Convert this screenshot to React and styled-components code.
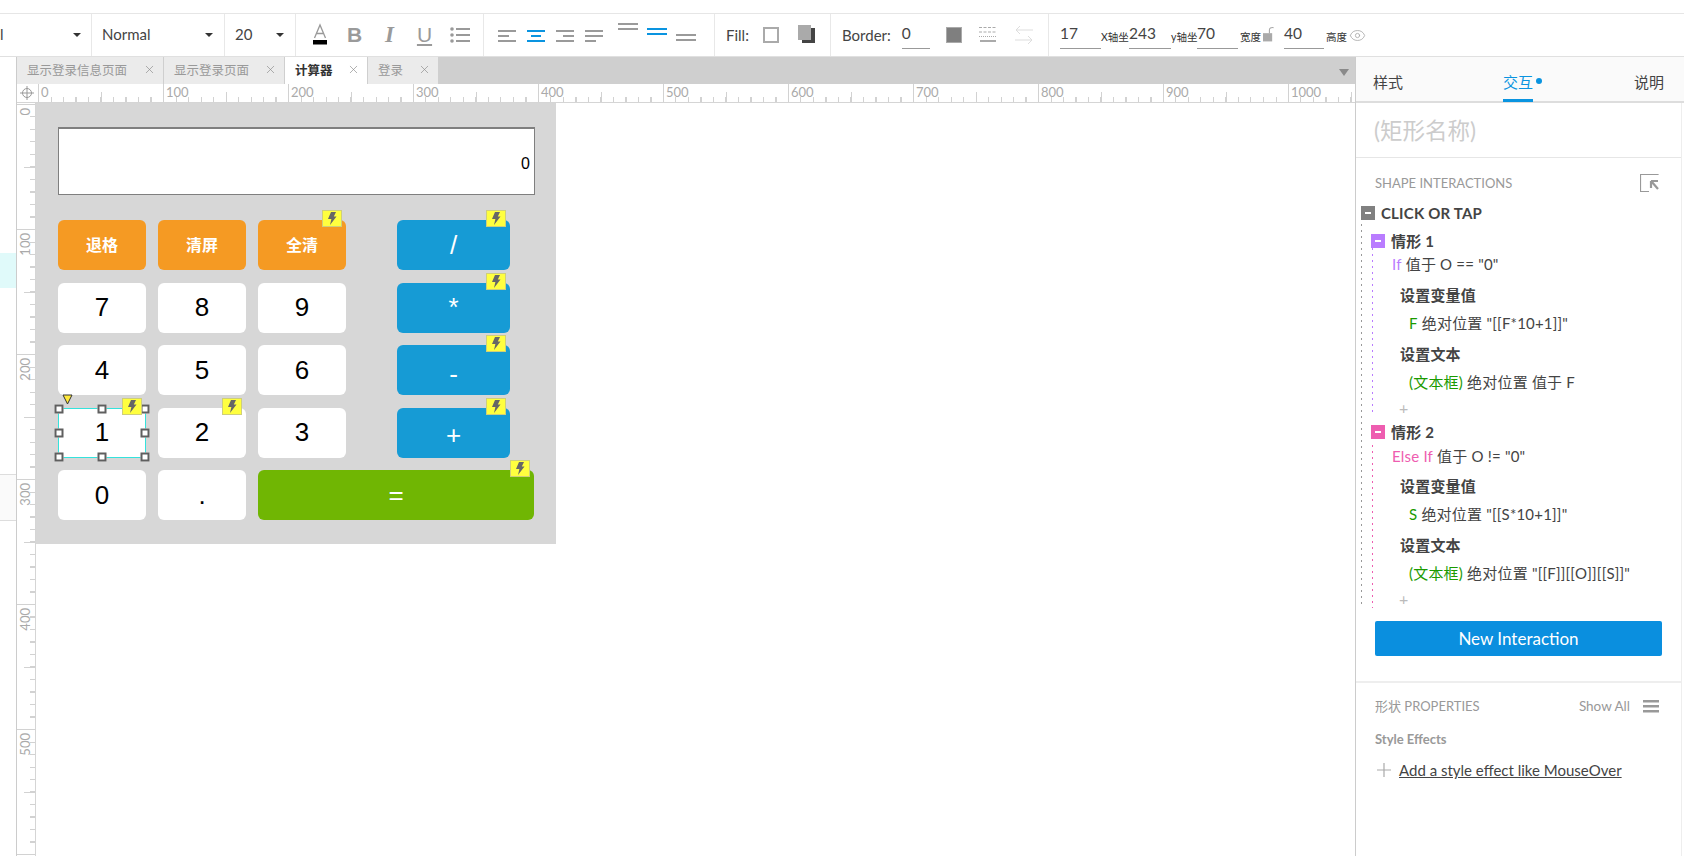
import React from 'react';
import styled, {createGlobalStyle} from 'styled-components';
import {Eye, X} from 'lucide-react';

const UI_FONT = '"Lato", "Noto Sans CJK SC", sans-serif';
const ARIAL = '"Liberation Sans", "Noto Sans CJK SC", sans-serif';

const GlobalStyle = createGlobalStyle`
    html, body {
        margin: 0;
        background: #fff;
        overflow: hidden;
        font-family: ${UI_FONT};
        color: #333;
    }
`;

const Page = styled.div`
    width: 1684px;
    height: 856px;
    display: flex;
    flex-direction: column;
    overflow: hidden;
`;

const TopStrip = styled.div`
    height: 13px;
    flex: none;
    border-bottom: 1px solid #e6e6e6;
`;

/* toolbar */

const Toolbar = styled.div`
    height: 43px;
    flex: none;
    display: flex;
    border-bottom: 1px solid #e0e0e0;
    box-sizing: border-box;
`;

const Section = styled.div`
    width: ${props => props.$width}px;
    flex: none;
    box-sizing: border-box;
    padding-left: ${props => props.$pad || 0}px;
    padding-right: ${props => props.$padRight || 0}px;
    display: flex;
    align-items: center;
    justify-content: ${props => props.$between ? "space-between" : "flex-start"};
    border-right: ${props => props.$last ? "none" : "1px solid #e8e8e8"};
`;

const SelectText = styled.span`
    font-size: 15px;
    line-height: 18px;
    margin-bottom: 3px;
    color: #444;
`;

const Caret = styled.span`
    width: 0;
    height: 0;
    border-left: 4px solid transparent;
    border-right: 4px solid transparent;
    border-top: 4px solid #333;
`;

const IconSlot = styled.div`
    width: ${props => props.$width}px;
    margin-left: ${props => props.$left || 0}px;
    flex: none;
    display: flex;
    align-items: center;
    justify-content: center;
`;

const Glyph = styled.span`
    font-family: ${props => props.$italic ? '"Liberation Serif", serif' : ARIAL};
    font-size: ${props => props.$italic ? "23px" : "21px"};
    line-height: 24px;
    color: #9a9a9a;
    font-weight: ${props => props.$bold ? 700 : 400};
    font-style: ${props => props.$italic ? "italic" : "normal"};
    text-decoration: ${props => props.$underline ? "underline" : "none"};
`;

const ToolLabel = styled.span`
    font-size: 15px;
    color: #444;
    margin-right: ${props => props.$right || 0}px;
`;

const NumField = styled.div`
    width: ${props => props.$width}px;
    margin-right: ${props => props.$right || 0}px;
    margin-left: ${props => props.$left || 0}px;
    flex: none;
    height: 27px;
    margin-top: 1px;
    line-height: 23px;
    font-size: 15.5px;
    color: #444;
    border-bottom: 1px solid #999;
    box-sizing: border-box;
`;

const TinyLabel = styled.span`
    width: ${props => props.$width}px;
    margin-left: ${props => props.$left || 0}px;
    flex: none;
    font-size: 10.5px;
    margin-top: 3px;
    color: #333;
    white-space: nowrap;
`;

const Bars = ({rects, color = "#9a9a9a", width = 20, height = 24}) => (
    <svg width={width} height={height} viewBox={`0 0 ${width} ${height}`}>
        {rects.map((r, i) => <rect key={i} x={r[0]} y={r[1]} width={r[2]} height={r[3]} fill={color}/>)}
    </svg>
);

const FontColorIcon = () => (
    <svg width="16" height="24" viewBox="0 0 16 24">
        <path d="M2.5 15 L8 2 L13.5 15 M4.5 10.5 H11.5" fill="none" stroke="#999" strokeWidth="1.3"/>
        <rect x="1" y="17" width="14" height="4.5" fill="#000"/>
    </svg>
);

const ListIcon = () => (
    <svg width="20" height="20" viewBox="0 0 20 20">
        <circle cx="2" cy="4" r="1.8" fill="#999"/>
        <circle cx="2" cy="10" r="1.8" fill="#999"/>
        <circle cx="2" cy="16" r="1.8" fill="#999"/>
        <rect x="6" y="3" width="14" height="2" fill="#999"/>
        <rect x="6" y="9" width="14" height="2" fill="#999"/>
        <rect x="6" y="15" width="14" height="2" fill="#999"/>
    </svg>
);

const ShadowIcon = () => (
    <svg width="17" height="20" viewBox="0 0 17 20">
        <rect x="4" y="3" width="13" height="15" fill="#444"/>
        <rect x="0" y="0" width="13" height="15" fill="#aaa"/>
    </svg>
);

const BorderStyleIcon = () => (
    <svg width="18" height="20" viewBox="0 0 18 20">
        <path d="M0 2.5H18 M0 7H18" stroke="#aaa" strokeWidth="1" strokeDasharray="3 1.5"/>
        <path d="M0 11.5H18" stroke="#aaa" strokeWidth="1" strokeDasharray="1 1"/>
        <rect x="1" y="15" width="16" height="2" fill="#aaa"/>
    </svg>
);

const ArrowsIcon = () => (
    <svg width="18" height="20" viewBox="0 0 18 20">
        <path d="M18 5H1 M5 1L1 5L5 9 M0 15H17 M13 11L17 15L13 19" fill="none" stroke="#ddd" strokeWidth="1"/>
    </svg>
);

const LockIcon = () => (
    <svg width="12" height="20" viewBox="0 0 12 20">
        <path d="M7 8V4.5C7 2.5 8.5 1.5 11.5 2" fill="none" stroke="#aaa" strokeWidth="1.2"/>
        <rect x="0" y="8" width="10" height="9" fill="#aaa"/>
    </svg>
);

const FillBox = styled.div`
    width: 16px;
    height: 16px;
    box-sizing: border-box;
    border: 2px solid #aaa;
    background: #fff;
`;

const Swatch = styled.div`
    width: 16px;
    height: 16px;
    background: #7f7f7f;
    border: 1px solid #aaa;
    box-sizing: border-box;
`;

const AppToolbar = () => <Toolbar>
    <Section $width={92} $between $padRight={10}>
        <SelectText>l</SelectText>
        <Caret/>
    </Section>
    <Section $width={133} $between $pad={10} $padRight={11}>
        <SelectText>Normal</SelectText>
        <Caret/>
    </Section>
    <Section $width={71} $between $pad={10} $padRight={11}>
        <SelectText>20</SelectText>
        <Caret/>
    </Section>
    <Section $width={188} $pad={6}>
        <IconSlot $width={35}><FontColorIcon/></IconSlot>
        <IconSlot $width={35}><Glyph $bold>B</Glyph></IconSlot>
        <IconSlot $width={35}><Glyph $italic $bold>I</Glyph></IconSlot>
        <IconSlot $width={35}><Glyph $underline>U</Glyph></IconSlot>
        <IconSlot $width={35}><ListIcon/></IconSlot>
    </Section>
    <Section $width={231} $pad={8}>
        <IconSlot $width={29}><Bars rects={[[1, 7, 18, 2], [1, 12, 11, 2], [1, 17, 18, 2]]}/></IconSlot>
        <IconSlot $width={29}><Bars color="#0a94e0" rects={[[1, 7, 18, 2], [5, 12, 10, 2], [1, 17, 18, 2]]}/></IconSlot>
        <IconSlot $width={29}><Bars rects={[[1, 7, 18, 2], [8, 12, 11, 2], [1, 17, 18, 2]]}/></IconSlot>
        <IconSlot $width={29}><Bars rects={[[1, 7, 18, 2], [1, 12, 18, 2], [1, 17, 11, 2]]}/></IconSlot>
        <IconSlot $width={29} $left={5}><Bars rects={[[0, 0, 20, 2], [0, 5, 20, 2]]}/></IconSlot>
        <IconSlot $width={29}><Bars color="#0a94e0" rects={[[0, 5, 20, 2], [0, 10, 20, 2]]}/></IconSlot>
        <IconSlot $width={29}><Bars rects={[[0, 11, 20, 2], [0, 16, 20, 2]]}/></IconSlot>
    </Section>
    <Section $width={116} $pad={11}>
        <ToolLabel $right={14}>Fill:</ToolLabel>
        <FillBox/>
        <IconSlot $width={17} $left={19}><ShadowIcon/></IconSlot>
    </Section>
    <Section $width={218} $pad={11}>
        <ToolLabel $right={11}>Border:</ToolLabel>
        <NumField $width={28} $right={16}>0</NumField>
        <Swatch/>
        <IconSlot $width={18} $left={17}><BorderStyleIcon/></IconSlot>
        <IconSlot $width={18} $left={18}><ArrowsIcon/></IconSlot>
    </Section>
    <Section $width={330} $pad={11} $last>
        <NumField $width={41}>17</NumField>
        <TinyLabel $width={28}>X轴坐</TinyLabel>
        <NumField $width={42}>243</NumField>
        <TinyLabel $width={26}>y轴坐</TinyLabel>
        <NumField $width={41}>70</NumField>
        <TinyLabel $width={23} $left={2}>宽度</TinyLabel>
        <IconSlot $width={11}><LockIcon/></IconSlot>
        <NumField $width={40} $left={10}>40</NumField>
        <TinyLabel $width={22} $left={2}>高度</TinyLabel>
        <IconSlot $width={18}><Eye size={17} color="#aaa" strokeWidth={1.2}/></IconSlot>
    </Section>
</Toolbar>;

/* tabs and rulers */

const Main = styled.div`
    flex: 1;
    min-height: 0;
    display: flex;
`;

const LeftRail = styled.div`
    width: 17px;
    flex: none;
    box-sizing: border-box;
    border-right: 1px solid #ccc;
    display: flex;
    flex-direction: column;
`;

const RailBlock = styled.div`
    margin-top: ${props => props.$top}px;
    height: ${props => props.$height}px;
    flex: none;
    box-sizing: border-box;
    background: ${props => props.$color};
    border-top: ${props => props.$lined ? "1px solid #ddd" : "none"};
    border-bottom: ${props => props.$lined ? "1px solid #ddd" : "none"};
`;

const Workspace = styled.div`
    flex: 1;
    min-width: 0;
    display: flex;
    flex-direction: column;
`;

const TabStrip = styled.div`
    height: 27px;
    flex: none;
    position: relative;
    display: flex;
    gap: 1px;
    background: #cfcfcf;
`;

const Tab = styled.div`
    width: ${props => props.$width}px;
    flex: none;
    box-sizing: border-box;
    padding: 0 7px 2px 10px;
    display: flex;
    align-items: center;
    justify-content: space-between;
    font-size: 12.5px;
    font-weight: ${props => props.$active ? 700 : 400};
    color: ${props => props.$active ? "#333" : "#999"};
    background: ${props => props.$active ? "#fff" : "#ebebeb"};
    svg {
        flex: none;
    }
`;

const TabMenuCaret = styled.span`
    position: absolute;
    right: 6px;
    top: 12px;
    width: 0;
    height: 0;
    border-left: 5px solid transparent;
    border-right: 5px solid transparent;
    border-top: 7px solid #8a8a8a;
`;

const RulerRow = styled.div`
    height: 19px;
    flex: none;
    display: flex;
    border-bottom: 1px solid #d5d5d5;
    box-sizing: border-box;
`;

const RulerCorner = styled.div`
    width: 21px;
    flex: none;
    box-sizing: border-box;
    padding-right: 2px;
    display: flex;
    align-items: center;
    justify-content: center;
`;

const HRuler = styled.div`
    flex: 1;
    min-width: 0;
    display: flex;
    overflow: hidden;
`;

const TICK = "#d2d2d2";

const HCell = styled.div`
    width: 125px;
    flex: none;
    box-sizing: border-box;
    padding: 1px 0 0 3px;
    font-size: 13px;
    line-height: 15px;
    color: #aaa;
    background:
        linear-gradient(${TICK}, ${TICK}) 0 0 / 1px 100% no-repeat,
        linear-gradient(${TICK}, ${TICK}) 62.5px 100% / 1px 10px no-repeat,
        repeating-linear-gradient(90deg, ${TICK} 0 1px, transparent 1px 12.5px) 0 100% / 100% 5px no-repeat;
`;

const CanvasRow = styled.div`
    flex: 1;
    min-height: 0;
    display: flex;
`;

const VRuler = styled.div`
    width: 19px;
    flex: none;
    box-sizing: border-box;
    padding-top: 1px;
    border-right: 1px solid #d5d5d5;
    overflow: hidden;
`;

const VCell = styled.div`
    height: 125px;
    box-sizing: border-box;
    padding: 4px 0 0 1px;
    background:
        linear-gradient(${TICK}, ${TICK}) 0 0 / 100% 1px no-repeat,
        linear-gradient(${TICK}, ${TICK}) 100% 62.5px / 11px 1px no-repeat,
        repeating-linear-gradient(180deg, ${TICK} 0 1px, transparent 1px 12.5px) 100% 0 / 5px 100% no-repeat;
`;

const VLabel = styled.span`
    display: block;
    writing-mode: vertical-rl;
    transform: rotate(180deg);
    font-size: 13px;
    line-height: 14px;
    color: #aaa;
`;

const Crosshair = () => (
    <svg width="14" height="14" viewBox="0 0 14 14">
        <circle cx="7" cy="7" r="4.5" fill="none" stroke="#999" strokeWidth="1"/>
        <path d="M7 0V14 M0 7H14" stroke="#999" strokeWidth="1"/>
    </svg>
);

/* calculator on the canvas */

const Canvas = styled.div`
    flex: 1;
    min-width: 0;
    background: #fff;
`;

const Artboard = styled.div`
    width: 520px;
    height: 441px;
    box-sizing: border-box;
    padding: 24px 22px;
    background: #d7d7d7;
`;

const Display = styled.div`
    width: 477px;
    height: 68px;
    box-sizing: border-box;
    margin-bottom: 25px;
    padding-right: 4px;
    background: #fff;
    border: 1px solid #7f7f7f;
    border-top-width: 2px;
    display: flex;
    align-items: center;
    justify-content: flex-end;
    font-family: ${ARIAL};
    font-size: 16px;
    padding-top: 4px;
    color: #000;
`;

const Keypad = styled.div`
    display: grid;
    grid-template-columns: 88px 88px 88px 27px 113px 12px;
    grid-auto-rows: 50px;
    column-gap: 12px;
    row-gap: 12.5px;
`;

const KEY_COLORS = {
    white: "#fff",
    orange: "#f59a23",
    blue: "#169bd5",
    green: "#70b603"
};

const Key = styled.div`
    position: relative;
    grid-column: ${props => props.$column || "auto"};
    border-radius: 6px;
    display: flex;
    align-items: center;
    justify-content: center;
    font-family: ${ARIAL};
    font-size: ${props => props.$small ? "16px" : "26px"};
    font-weight: ${props => props.$small ? 700 : 400};
    color: ${props => props.$kind === "white" ? "#000" : "#fff"};
    background: ${props => KEY_COLORS[props.$kind]};
`;

const Badge = styled.span`
    position: absolute;
    right: 4px;
    top: -10px;
    width: 20px;
    height: 17px;
    box-sizing: border-box;
    background: #ffff3f;
    border: 1px solid #cfcf7a;
    display: flex;
    align-items: center;
    justify-content: center;
    z-index: 2;
`;

const Selection = styled.div`
    position: absolute;
    inset: 0;
    border: 1px solid #35e2dc;
    background: #fff;
    z-index: 1;
`;

const Handle = styled.span`
    position: absolute;
    left: ${props => props.$x}%;
    top: ${props => props.$y}%;
    width: 9px;
    height: 9px;
    box-sizing: border-box;
    transform: translate(-50%, -50%);
    background: #fff;
    border: 2px solid #5f5f5f;
`;

const KeyLabel = styled.span`
    position: relative;
    z-index: 1;
    margin-top: ${props => props.$shift || 0}px;
`;

const Marker = styled.svg`
    position: absolute;
    left: 4px;
    top: -14px;
    z-index: 2;
`;

const Bolt = () => (
    <svg width="10" height="13" viewBox="0 0 10 13">
        <path d="M4 0H9L6.8 4.5H9.5L3 13L4.4 7H1Z" fill="#666"/>
    </svg>
);

const HANDLES = [[0, 0], [50, 0], [100, 0], [0, 50], [100, 50], [0, 100], [50, 100], [100, 100]];

const CalcKey = ({label, kind = "white", small, column, bolt, selected, shift}) => (
    <Key $kind={kind} $small={small} $column={column}>
        {selected && <Selection>
            {HANDLES.map(h => <Handle key={h.join()} $x={h[0]} $y={h[1]}/>)}
        </Selection>}
        {selected && <Marker width="11" height="11" viewBox="0 0 11 11">
            <path d="M1 1H10L5.5 10Z" fill="#ffe93b" stroke="#333" strokeWidth="1"/>
        </Marker>}
        <KeyLabel $shift={shift}>{label}</KeyLabel>
        {bolt && <Badge><Bolt/></Badge>}
    </Key>
);

const Calculator = () => <Artboard>
    <Display>0</Display>
    <Keypad>
        <CalcKey label="退格" kind="orange" small shift={-2}/>
        <CalcKey label="清屏" kind="orange" small shift={-2}/>
        <CalcKey label="全清" kind="orange" small bolt shift={-2}/>
        <CalcKey label="/" kind="blue" column="5" bolt/>
        <CalcKey label="7" column="1"/>
        <CalcKey label="8"/>
        <CalcKey label="9"/>
        <CalcKey label="*" kind="blue" column="5" bolt/>
        <CalcKey label="4" column="1"/>
        <CalcKey label="5"/>
        <CalcKey label="6"/>
        <CalcKey label="-" kind="blue" column="5" bolt shift={9}/>
        <CalcKey label="1" column="1" bolt selected/>
        <CalcKey label="2" bolt/>
        <CalcKey label="3"/>
        <CalcKey label="+" kind="blue" column="5" bolt shift={5}/>
        <CalcKey label="0" column="1"/>
        <CalcKey label="."/>
        <CalcKey label="=" kind="green" column="3 / 7" bolt/>
    </Keypad>
</Artboard>;

/* right panel */

const Panel = styled.div`
    width: 329px;
    flex: none;
    box-sizing: border-box;
    border-left: 1px solid #ccc;
    display: flex;
    flex-direction: column;
`;

const PanelTabs = styled.div`
    height: 46px;
    flex: none;
    box-sizing: border-box;
    padding: 0 20px 0 17px;
    display: flex;
    align-items: flex-end;
    justify-content: space-between;
    background: #fafafa;
    border-bottom: 2px solid #ddd;
`;

const PanelTab = styled.div`
    position: relative;
    font-size: 15px;
    line-height: 18px;
    padding-bottom: 8px;
    margin-left: ${props => props.$active ? "7px" : "0"};
    margin-right: ${props => props.$active ? "8px" : "0"};
    color: ${props => props.$active ? "#0a94e0" : "#444"};
    border-bottom: 3px solid ${props => props.$active ? "#0a94e0" : "transparent"};
    margin-bottom: -1px;
`;

const TabDot = styled.span`
    position: absolute;
    left: 33px;
    top: 5px;
    width: 6px;
    height: 6px;
    border-radius: 50%;
    background: #0a94e0;
`;

const PanelBody = styled.div`
    flex: 1;
    margin-right: 2px;
    border-right: 1px solid #eee;
    display: flex;
    flex-direction: column;
`;

const ShapeName = styled.div`
    height: 55px;
    flex: none;
    box-sizing: border-box;
    padding: 0 0 2px 18px;
    display: flex;
    align-items: center;
    font-size: 22.5px;
    color: #ccc;
    border-bottom: 1px solid #e6e6e6;
`;

const SectionHead = styled.div`
    height: ${props => props.$height}px;
    flex: none;
    box-sizing: border-box;
    padding: ${props => props.$top || 0}px 22px 0 19px;
    display: flex;
    align-items: center;
    justify-content: space-between;
    font-size: 13px;
    color: #999;
`;

const Tree = styled.div`
    position: relative;
    padding-bottom: 11px;
`;

const Guide = styled.span`
    position: absolute;
    left: ${props => props.$left}px;
    top: ${props => props.$top}px;
    height: ${props => props.$height}px;
    width: 1px;
    background: repeating-linear-gradient(180deg, ${props => props.$color} 0 2px, transparent 2px 6px);
`;

const Row = styled.div`
    height: 22px;
    box-sizing: border-box;
    margin-top: ${props => props.$gap || 0}px;
    padding-left: ${props => props.$indent}px;
    display: flex;
    align-items: center;
    font-size: 15px;
    line-height: 22px;
    letter-spacing: 0.2px;
    white-space: pre;
    color: #444;
    font-weight: ${props => props.$bold ? 700 : 400};
`;

const ToggleBox = styled.span`
    position: relative;
    width: 14px;
    height: 14px;
    flex: none;
    margin-right: 6px;
    background: ${props => props.$color};
    &::after {
        content: "";
        position: absolute;
        left: 4px;
        top: 6px;
        width: 6px;
        height: 2px;
        background: #fff;
    }
`;

const Keyword = styled.span`
    color: ${props => props.$color};
`;

const AddMark = styled.span`
    font-size: 16px;
    font-weight: 400;
    color: #bbb;
`;

const PrimaryButton = styled.div`
    width: 287px;
    height: 35px;
    flex: none;
    margin-left: 19px;
    border-radius: 2px;
    display: flex;
    align-items: center;
    justify-content: center;
    font-size: 17px;
    color: #fff;
    background: #0a8fdf;
`;

const Divider = styled.div`
    height: 2px;
    flex: none;
    margin-top: 25px;
    background: #eee;
`;

const ShowAll = styled.span`
    display: flex;
    align-items: center;
    gap: 13px;
    font-size: 13.5px;
`;

const EffectsTitle = styled.div`
    padding-left: 19px;
    margin-top: 3px;
    font-size: 13px;
    font-weight: 700;
    color: #999;
`;

const AddEffect = styled.div`
    padding-left: 21px;
    margin-top: 14px;
    display: flex;
    align-items: center;
    gap: 8px;
    font-size: 15px;
    color: #444;
    span {
        text-decoration: underline;
    }
`;

const ExportIcon = () => (
    <svg width="19" height="18" viewBox="0 0 19 18">
        <path d="M18 1V0.5H0.5V17.5H9" fill="none" stroke="#999" strokeWidth="1.2"/>
        <path d="M11 7H18 M11 7V14 M11.5 7.5L18 15" fill="none" stroke="#999" strokeWidth="2.2"/>
    </svg>
);

const MenuIcon = () => <Bars width={16} height={14} color="#999" rects={[[0, 1, 16, 2.5], [0, 6, 16, 2.5], [0, 11, 16, 2.5]]}/>;

const PlusIcon = () => (
    <svg width="14" height="14" viewBox="0 0 14 14">
        <path d="M7 0V14 M0 7H14" stroke="#aaa" strokeWidth="1.2"/>
    </svg>
);

const GREEN = "#1a9a00";
const PURPLE = "#b97cff";
const PINK = "#ee5db0";

const SidePanel = () => <Panel>
    <PanelTabs>
        <PanelTab>样式</PanelTab>
        <PanelTab $active>交互<TabDot/></PanelTab>
        <PanelTab>说明</PanelTab>
    </PanelTabs>
    <PanelBody>
        <ShapeName>(矩形名称)</ShapeName>
        <SectionHead $height={44} $top={6}>
            SHAPE INTERACTIONS
            <ExportIcon/>
        </SectionHead>
        <Tree>
            <Guide $left={5} $top={22} $height={384} $color="#999"/>
            <Guide $left={16} $top={46} $height={168} $color={PURPLE}/>
            <Guide $left={16} $top={243} $height={163} $color={PINK}/>
            <Row $indent={5} $bold><ToggleBox $color="#808080"/>CLICK OR TAP</Row>
            <Row $indent={15} $gap={6} $bold><ToggleBox $color={PURPLE}/>情形 1</Row>
            <Row $indent={36} $gap={1}><Keyword $color={PURPLE}>If</Keyword> 值于 O == "0"</Row>
            <Row $indent={44} $gap={9} $bold>设置变量值</Row>
            <Row $indent={53} $gap={6}><Keyword $color={GREEN}>F</Keyword> 绝对位置 "[[F*10+1]]"</Row>
            <Row $indent={44} $gap={9} $bold>设置文本</Row>
            <Row $indent={53} $gap={6}><Keyword $color={GREEN}>(文本框)</Keyword> 绝对位置 值于 F</Row>
            <Row $indent={43} $gap={4}><AddMark>+</AddMark></Row>
            <Row $indent={15} $gap={2} $bold><ToggleBox $color={PINK}/>情形 2</Row>
            <Row $indent={36} $gap={2}><Keyword $color={PINK}>Else If</Keyword> 值于 O != "0"</Row>
            <Row $indent={44} $gap={8} $bold>设置变量值</Row>
            <Row $indent={53} $gap={6}><Keyword $color={GREEN}>S</Keyword> 绝对位置 "[[S*10+1]]"</Row>
            <Row $indent={44} $gap={9} $bold>设置文本</Row>
            <Row $indent={53} $gap={6}><Keyword $color={GREEN}>(文本框)</Keyword> 绝对位置 "[[F]][[O]][[S]]"</Row>
            <Row $indent={43} $gap={4}><AddMark>+</AddMark></Row>
        </Tree>
        <PrimaryButton>New Interaction</PrimaryButton>
        <Divider/>
        <SectionHead $height={45}>
            形状 PROPERTIES
            <ShowAll>Show All<MenuIcon/></ShowAll>
        </SectionHead>
        <EffectsTitle>Style Effects</EffectsTitle>
        <AddEffect><PlusIcon/><span>Add a style effect like MouseOver</span></AddEffect>
    </PanelBody>
</Panel>;

const TABS = [
    {name: "显示登录信息页面", width: 146},
    {name: "显示登录页面", width: 120},
    {name: "计算器", width: 82, active: true},
    {name: "登录", width: 70}
];

const HORIZONTAL_MARKS = [0, 100, 200, 300, 400, 500, 600, 700, 800, 900, 1000];
const VERTICAL_MARKS = [0, 100, 200, 300, 400, 500];

const App = () => <Page>
    <GlobalStyle/>
    <TopStrip/>
    <AppToolbar/>
    <Main>
        <LeftRail>
            <RailBlock $top={196} $height={35} $color="#e0fafa"/>
            <RailBlock $top={186} $height={47} $color="#fafafa" $lined/>
        </LeftRail>
        <Workspace>
            <TabStrip>
                {TABS.map(tab => <Tab key={tab.name} $width={tab.width} $active={tab.active}>
                    {tab.name}
                    <X size={13} color="#888" strokeWidth={1.2}/>
                </Tab>)}
                <TabMenuCaret/>
            </TabStrip>
            <RulerRow>
                <RulerCorner><Crosshair/></RulerCorner>
                <HRuler>
                    {HORIZONTAL_MARKS.map(mark => <HCell key={mark}>{mark}</HCell>)}
                </HRuler>
            </RulerRow>
            <CanvasRow>
                <VRuler>
                    {VERTICAL_MARKS.map(mark => <VCell key={mark}><VLabel>{mark}</VLabel></VCell>)}
                    <VCell/>
                </VRuler>
                <Canvas>
                    <Calculator/>
                </Canvas>
            </CanvasRow>
        </Workspace>
        <SidePanel/>
    </Main>
</Page>;

export default App;
